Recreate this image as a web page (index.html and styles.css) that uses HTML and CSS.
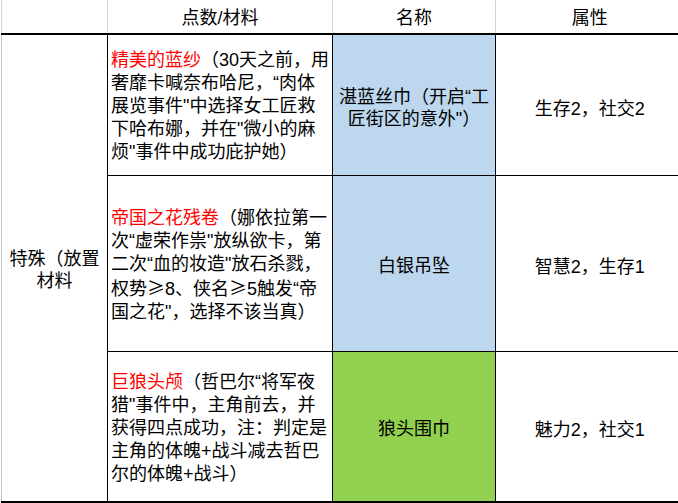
FILE: index.html
```html
<!DOCTYPE html>
<html lang="zh-CN">
<head>
<meta charset="utf-8">
<title>特殊材料</title>
<link rel="stylesheet" href="styles.css">
</head>
<body>
<table class="sheet">
  <colgroup>
    <col class="c1">
    <col class="c2">
    <col class="c3">
    <col class="c4">
  </colgroup>
  <thead>
    <tr class="head">
      <th class="h h-first"></th>
      <th class="h">点数/材料</th>
      <th class="h">名称</th>
      <th class="h">属性</th>
    </tr>
  </thead>
  <tbody>
    <tr class="r1">
      <td class="cat" rowspan="3">特殊（放置<br>材料</td>
      <td class="desc"><span class="red">精美的蓝纱</span>（30天之前，用<br>奢靡卡喊奈布哈尼，“肉体<br>展览事件"中选择女工匠救<br>下哈布娜，并在"微小的麻<br>烦"事件中成功庇护她）</td>
      <td class="name blue">湛蓝丝巾（开启“工<br>匠街区的意外"）</td>
      <td class="attr">生存2，社交2</td>
    </tr>
    <tr class="r2">
      <td class="desc"><span class="red">帝国之花残卷</span>（娜依拉第一<br>次“虚荣作祟"放纵欲卡，第<br>二次“血的妆造"放石杀戮，<br>权势<span class="cjk">≥</span>8、侠名<span class="cjk">≥</span>5触发“帝<br>国之花"，选择不该当真）</td>
      <td class="name blue">白银吊坠</td>
      <td class="attr">智慧2，生存1</td>
    </tr>
    <tr class="r3">
      <td class="desc"><span class="red">巨狼头颅</span>（哲巴尔“将军夜<br>猎"事件中，主角前去，并<br>获得四点成功，注：判定是<br>主角的体魄+战斗减去哲巴<br>尔的体魄+战斗）</td>
      <td class="name green">狼头围巾</td>
      <td class="attr">魅力2，社交1</td>
    </tr>
  </tbody>
</table>
</body>
</html>
```
FILE: styles.css
```css
html, body {
  margin: 0;
  padding: 0;
  background: #ffffff;
  overflow: hidden;
}

body {
  width: 678px;
  height: 503px;
  font-family: "Liberation Sans", "Noto Sans CJK SC", sans-serif;
  font-size: 18px;
  color: #000000;
  text-spacing-trim: space-all;
  text-autospace: no-autospace;
}

.cjk {
  font-family: "Noto Sans CJK SC", sans-serif;
}

.sheet {
  border-collapse: collapse;
  table-layout: fixed;
  width: 682px;
  margin-left: 1px;
}

.c1 { width: 106px; }
.c2 { width: 225px; }
.c3 { width: 163px; }
.c4 { width: 188px; }

.head { height: 34px; }

.h {
  font-weight: normal;
  text-align: center;
  vertical-align: middle;
  padding: 2px 0 0 0;
  line-height: 22px;
  border-left: 1px solid #d4d4d4;
  border-bottom: 2px solid #000000;
}

.r1 { height: 141px; }
.r2 { height: 176px; }
.r3 { height: 151px; }

td {
  padding: 0;
  vertical-align: middle;
  white-space: nowrap;
}

.cat {
  border-left: 1px solid #c8c8c8;
  border-right: 1px solid #000000;
  border-bottom: 2px solid #000000;
  text-align: center;
  line-height: 22px;
  padding-top: 4px;
}

.desc {
  border: 1px solid #000000;
  text-align: left;
  line-height: 23px;
  padding: 4px 0 0 3px;
}

.r3 .desc,
.r3 .name,
.r3 .attr {
  border-bottom: 2px solid #000000;
}

.name {
  border: 1px solid #000000;
  text-align: center;
  line-height: 22px;
  padding-top: 6px;
}

.attr {
  border: 1px solid #000000;
  border-right: none;
  text-align: center;
  padding-top: 4px;
}

.blue { background: #bdd7ee; }
.green { background: #92d050; }

.red { color: #ff0000; }
```
